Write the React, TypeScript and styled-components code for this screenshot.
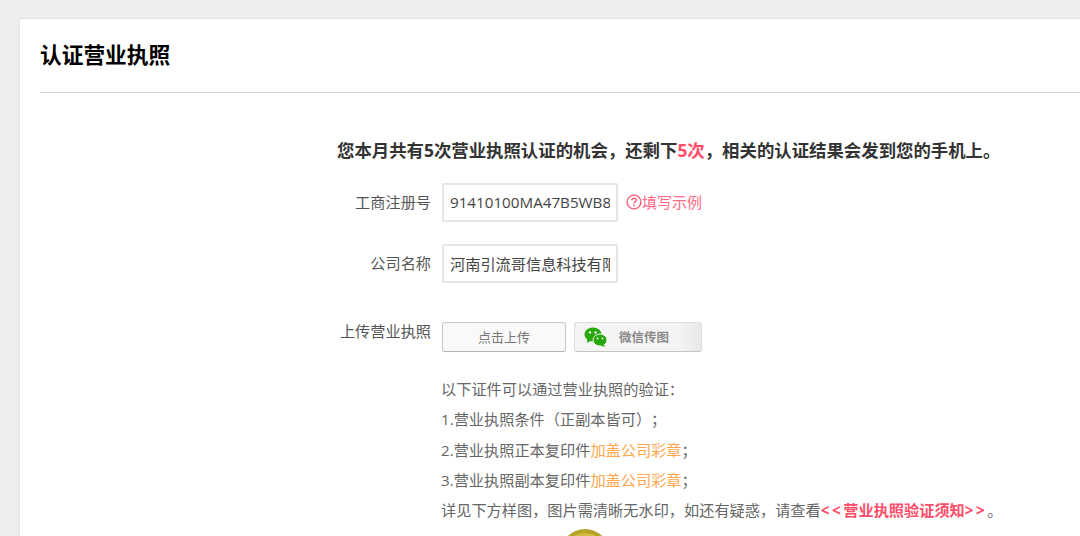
import React from "react";
import styled, { createGlobalStyle } from "styled-components";

const Global = createGlobalStyle`
  html, body { margin: 0; padding: 0; height: 536px; overflow: hidden; background: #ebedef; }
  body { font-family: "Open Sans", "Noto Sans CJK SC", sans-serif; text-spacing-trim: space-all; }
  #root { width: 1080px; height: 536px; overflow: hidden; }
`;

const Page = styled.div`
  width: 1080px;
  height: 536px;
  padding: 18px 0 0 19px;
  box-sizing: border-box;
  overflow: hidden;
`;

const Card = styled.main`
  width: 1100px;
  height: 700px;
  box-sizing: border-box;
  background: #fff;
  border: 1px solid #e2e3e5;
  padding: 0 0 0 20px;
`;

const Header = styled.header`
  height: 73px;
  width: 1040px;
  border-bottom: 1px solid #d2d2d2;
  box-sizing: content-box;
  display: flex;
  align-items: center;
`;

const Title = styled.h1`
  margin: 0 0 2px 0;
  font: 700 21.7px/30px "Open Sans", "Noto Sans CJK SC", sans-serif;
  color: #000;
`;

const Notice = styled.p`
  margin: 44px 0 0 297px;
  font-size: 17.4px;
  line-height: 26px;
  font-weight: 700;
  color: #333;
  white-space: nowrap;
`;

const Accent = styled.span`
  color: #ff4d6a;
`;

const Row = styled.div<{ $top: number }>`
  display: flex;
  align-items: center;
  margin-top: ${(p) => p.$top}px;
`;

const Label = styled.label`
  width: 391px;
  margin-right: 11px;
  padding-bottom: 2px;
  flex: none;
  text-align: right;
  font-size: 15.2px;
  line-height: 22px;
  color: #555;
`;

const Field = styled.input`
  width: 176px;
  height: 39px;
  box-sizing: border-box;
  padding: 0 6px 2px;
  border: 2px solid #e6e6e6;
  border-radius: 2px;
  outline: none;
  background: #fff;
  font: 400 15.2px "Open Sans", "Noto Sans CJK SC", sans-serif;
  color: #444;
`;

const Example = styled.a`
  display: flex;
  align-items: center;
  margin-left: 8px;
  padding-bottom: 2px;
  font-size: 15px;
  line-height: 22px;
  color: #ff6b85;
`;

const UploadRow = styled.div`
  display: flex;
  align-items: flex-start;
  margin-top: 39px;
`;

const UploadLabel = styled(Label)`
  line-height: 18px;
  padding-bottom: 0;
`;

const Buttons = styled.div`
  display: flex;
  gap: 8px;
`;

const UploadButton = styled.button`
  width: 124px;
  height: 30px;
  padding: 0 0 2px;
  box-sizing: border-box;
  border: 1px solid #c8c8c8;
  border-bottom-color: #b4b4b4;
  border-radius: 3px;
  background: #f9f9f9;
  font: 400 13px "Open Sans", "Noto Sans CJK SC", sans-serif;
  color: #777;
`;

const WechatButton = styled.button`
  width: 128px;
  height: 30px;
  padding: 0 0 0 9px;
  box-sizing: border-box;
  display: flex;
  align-items: center;
  border: 1px solid #dcdcdc;
  border-bottom-color: #c4c4c4;
  border-radius: 3px;
  background: linear-gradient(90deg, #f4f4f4 0%, #f4f4f4 82%, #e8e8e8 100%);
  font: 700 12.5px "Open Sans", "Noto Sans CJK SC", sans-serif;
  color: #8a8a8a;
`;

const WechatText = styled.span`
  margin-left: 11px;
  padding-bottom: 2px;
`;

const Info = styled.div`
  margin: 22px 0 0 401px;
  font-size: 15.2px;
  line-height: 30.3px;
  color: #666;
  white-space: nowrap;
`;

const Orange = styled.span`
  color: #ffa64d;
`;

const Link = styled.a`
  color: #ff4d6a;
  font-weight: 700;
`;

const Chevrons = styled.span`
  letter-spacing: 2.6px;
`;

const Sample = styled.div`
  margin: 4px 0 0 520px;
  line-height: 0;
`;

const HelpIcon = () => (
  <svg width="16" height="16" viewBox="0 0 16 16" fill="none">
    <circle cx="8" cy="8" r="6.9" stroke="#ff5a78" strokeWidth="1.4" />
    <path d="M5.9 6.3C5.9 5 6.9 4.3 8 4.3c1.2 0 2.1.7 2.1 1.9 0 1.7-2.1 1.7-2.1 3.2" stroke="#ff5a78" strokeWidth="1.4" />
    <circle cx="8" cy="11.5" r="0.9" fill="#ff5a78" />
  </svg>
);

const WechatIcon = () => (
  <svg width="24" height="20" viewBox="0 0 24 20">
    <ellipse cx="9" cy="7.5" rx="8.5" ry="7" fill="#26a80a" />
    <path d="M3.5 11.5 L3 16 L8 13 Z" fill="#26a80a" />
    <ellipse cx="16" cy="13" rx="7" ry="6" fill="#26a80a" stroke="#f4f4f4" strokeWidth="1" />
    <path d="M19.5 17 L21 20 L16.5 18.5 Z" fill="#26a80a" />
    <circle cx="6" cy="5.5" r="1.2" fill="#f4f4f4" />
    <circle cx="11.5" cy="5.5" r="1.2" fill="#f4f4f4" />
    <circle cx="13.5" cy="11.5" r="1" fill="#f4f4f4" />
    <circle cx="18.5" cy="11.5" r="1" fill="#f4f4f4" />
  </svg>
);

const CoinIcon = () => (
  <svg width="50" height="50" viewBox="0 0 50 50">
    <circle cx="25" cy="25" r="25" fill="#b5a32a" />
    <circle cx="25" cy="25" r="21" fill="#d0bc3e" />
    <circle cx="25" cy="14" r="7" fill="#8f7f1c" />
  </svg>
);

export default function App() {
  return (
    <Page>
      <Global />
      <Card>
        <Header>
          <Title>认证营业执照</Title>
        </Header>
        <Notice>
          您本月共有5次营业执照认证的机会，还剩下<Accent>5次</Accent>，相关的认证结果会发到您的手机上。
        </Notice>
        <Row $top={20}>
          <Label>工商注册号</Label>
          <Field readOnly value="91410100MA47B5WB8X" />
          <Example>
            <HelpIcon />
            填写示例
          </Example>
        </Row>
        <Row $top={22}>
          <Label>公司名称</Label>
          <Field readOnly value="河南引流哥信息科技有限公司" />
        </Row>
        <UploadRow>
          <UploadLabel>上传营业执照</UploadLabel>
          <Buttons>
            <UploadButton>点击上传</UploadButton>
            <WechatButton>
              <WechatIcon />
              <WechatText>微信传图</WechatText>
            </WechatButton>
          </Buttons>
        </UploadRow>
        <Info>
          <div>以下证件可以通过营业执照的验证：</div>
          <div>1.营业执照条件（正副本皆可）；</div>
          <div>
            2.营业执照正本复印件<Orange>加盖公司彩章</Orange>；
          </div>
          <div>
            3.营业执照副本复印件<Orange>加盖公司彩章</Orange>；
          </div>
          <div>
            详见下方样图，图片需清晰无水印，如还有疑惑，请查看
            <Link>
              <Chevrons>&lt;&lt;</Chevrons>营业执照验证须知<Chevrons>&gt;&gt;</Chevrons>
            </Link>
            。
          </div>
        </Info>
        <Sample>
          <CoinIcon />
        </Sample>
      </Card>
    </Page>
  );
}
